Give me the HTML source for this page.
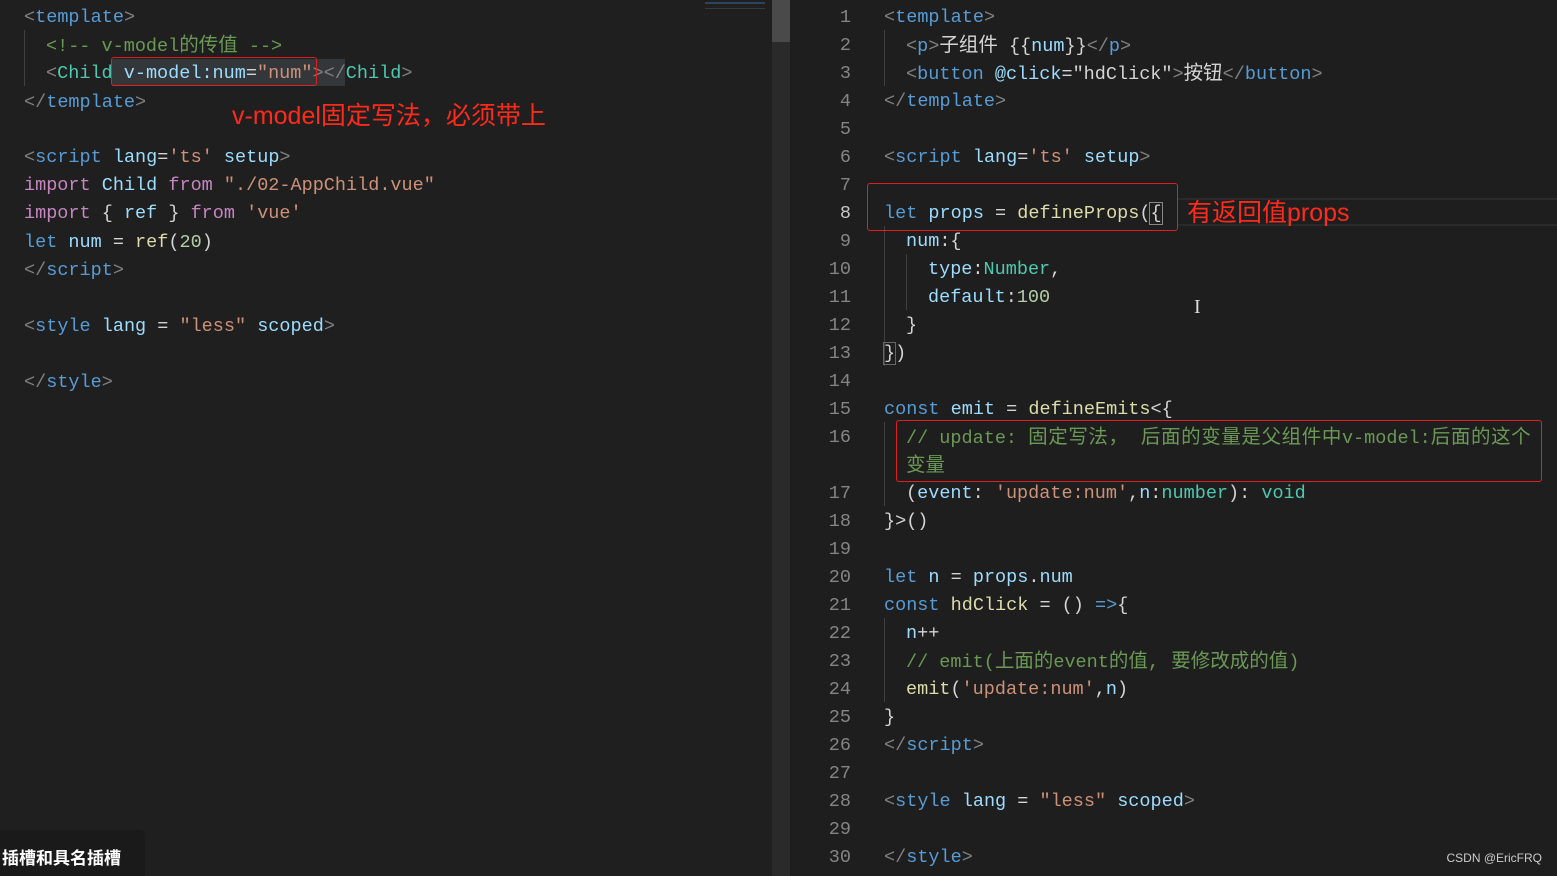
<!DOCTYPE html><html><head><meta charset="utf-8"><style>
body{margin:0;width:1557px;height:876px;background:#1f1f1f;overflow:hidden;position:relative;font-family:"Liberation Mono","Noto Sans CJK SC",monospace;font-size:18.5px;color:#d4d4d4}
.l{position:absolute;white-space:pre;line-height:28px;height:28px;margin-top:2px}
.n{position:absolute;left:800px;width:51px;text-align:right;color:#858585;line-height:28px;margin-top:2px}
.t{color:#569cd6}.b{color:#808080}.a{color:#9cdcfe}.s{color:#ce9178}.k{color:#c586c0}.f{color:#dcdcaa}.c{color:#6a9955}.num{color:#b5cea8}.g{color:#4ec9b0}.w{color:#d4d4d4}
.cj{font-size:19.5px}
.box{position:absolute;border:1.5px solid #e02020;border-radius:3px}
.red{position:absolute;color:#ff2a1a;font-family:"Liberation Sans","Noto Sans CJK SC",sans-serif;font-size:25px;white-space:pre}
.guide{position:absolute;width:1px;background:#404040}
</style></head><body>
<div style="position:absolute;left:772px;top:0;width:18px;height:876px;background:#2a2a2a"></div>
<div style="position:absolute;left:772px;top:0;width:18px;height:42px;background:#4a4a4a"></div>
<div style="position:absolute;left:790px;top:0;width:767px;height:876px;background:#1e1e1e"></div>
<div style="position:absolute;left:705px;top:2px;width:60px;height:30px;opacity:.5;background:linear-gradient(#3a6a9a 0 2px,transparent 2px 6px,#555 6px 7px,transparent 7px)"></div>
<!-- left -->
<div class="guide" style="left:24px;top:30px;height:56px"></div>
<div class="l" style="left:24px;top:2px"><span class="b">&lt;</span><span class="t">template</span><span class="b">&gt;</span></div>
<div class="l" style="left:46px;top:30px"><span class="c">&lt;!-- v-model<span class="cj">的传值</span> --&gt;</span></div>
<div style="position:absolute;left:112px;top:59px;width:233px;height:27px;background:#34373a"></div>
<div class="l" style="left:46px;top:58px"><span class="b">&lt;</span><span class="g">Child</span> <span class="a">v-model:num</span>=<span class="s">"num"</span><span class="b">&gt;&lt;/</span><span class="g">Child</span><span class="b">&gt;</span></div>
<div class="box" style="left:111px;top:57px;width:204px;height:27px"></div>
<div class="l" style="left:24px;top:87px"><span class="b">&lt;/</span><span class="t">template</span><span class="b">&gt;</span></div>
<div class="red" style="left:232px;top:96px">v-model固定写法，必须带上</div>
<div class="l" style="left:24px;top:142px"><span class="b">&lt;</span><span class="t">script</span> <span class="a">lang</span>=<span class="s">'ts'</span> <span class="a">setup</span><span class="b">&gt;</span></div>
<div class="l" style="left:24px;top:170px"><span class="k">import</span> <span class="a">Child</span> <span class="k">from</span> <span class="s">"./02-AppChild.vue"</span></div>
<div class="l" style="left:24px;top:198px"><span class="k">import</span> { <span class="a">ref</span> } <span class="k">from</span> <span class="s">'vue'</span></div>
<div class="l" style="left:24px;top:227px"><span class="t">let</span> <span class="a">num</span> = <span class="f">ref</span>(<span class="num">20</span>)</div>
<div class="l" style="left:24px;top:255px"><span class="b">&lt;/</span><span class="t">script</span><span class="b">&gt;</span></div>
<div class="l" style="left:24px;top:311px"><span class="b">&lt;</span><span class="t">style</span> <span class="a">lang</span> = <span class="s">"less"</span> <span class="a">scoped</span><span class="b">&gt;</span></div>
<div class="l" style="left:24px;top:367px"><span class="b">&lt;/</span><span class="t">style</span><span class="b">&gt;</span></div>
<div style="position:absolute;left:0;top:830px;width:145px;height:46px;background:#1a1a1a;border-radius:0 6px 0 0"></div>
<div style="position:absolute;left:2px;top:844px;color:#fff;font-family:'Noto Sans CJK SC',sans-serif;font-size:17px;font-weight:bold">插槽和具名插槽</div>
<!-- right -->
<div class="n" style="top:2px">1</div><div class="n" style="top:30px">2</div><div class="n" style="top:58px">3</div><div class="n" style="top:86px">4</div><div class="n" style="top:114px">5</div><div class="n" style="top:142px">6</div><div class="n" style="top:170px">7</div><div class="n" style="top:198px;color:#c6c6c6">8</div><div class="n" style="top:226px">9</div><div class="n" style="top:254px">10</div><div class="n" style="top:282px">11</div><div class="n" style="top:310px">12</div><div class="n" style="top:338px">13</div><div class="n" style="top:366px">14</div><div class="n" style="top:394px">15</div><div class="n" style="top:422px">16</div><div class="n" style="top:478px">17</div><div class="n" style="top:506px">18</div><div class="n" style="top:534px">19</div><div class="n" style="top:562px">20</div><div class="n" style="top:590px">21</div><div class="n" style="top:618px">22</div><div class="n" style="top:646px">23</div><div class="n" style="top:674px">24</div><div class="n" style="top:702px">25</div><div class="n" style="top:730px">26</div><div class="n" style="top:758px">27</div><div class="n" style="top:786px">28</div><div class="n" style="top:814px">29</div><div class="n" style="top:842px">30</div>
<div class="guide" style="left:884px;top:30px;height:56px"></div>
<div class="guide" style="left:884px;top:226px;height:140px"></div>
<div class="guide" style="left:906px;top:254px;height:56px"></div>
<div class="guide" style="left:884px;top:422px;height:84px"></div>
<div class="guide" style="left:884px;top:618px;height:84px"></div>
<div style="position:absolute;left:1178px;top:198px;width:379px;height:28px;border-top:2px solid #2a2a2a;border-bottom:2px solid #2a2a2a;box-sizing:border-box"></div>
<div class="l" style="left:884px;top:2px"><span class="b">&lt;</span><span class="t">template</span><span class="b">&gt;</span></div>
<div class="l" style="left:906px;top:30px"><span class="b">&lt;</span><span class="t">p</span><span class="b">&gt;</span><span class="cj">子组件</span> {{<span class="a">num</span>}}<span class="b">&lt;/</span><span class="t">p</span><span class="b">&gt;</span></div>
<div class="l" style="left:906px;top:58px"><span class="b">&lt;</span><span class="t">button</span> <span class="a">@click</span>=<span class="w">"hdClick"</span><span class="b">&gt;</span><span class="cj">按钮</span><span class="b">&lt;/</span><span class="t">button</span><span class="b">&gt;</span></div>
<div class="l" style="left:884px;top:86px"><span class="b">&lt;/</span><span class="t">template</span><span class="b">&gt;</span></div>
<div class="l" style="left:884px;top:142px"><span class="b">&lt;</span><span class="t">script</span> <span class="a">lang</span>=<span class="s">'ts'</span> <span class="a">setup</span><span class="b">&gt;</span></div>
<div class="l" style="left:884px;top:198px"><span class="t">let</span> <span class="a">props</span> = <span class="f">defineProps</span>(<span style="outline:1px solid #888">{</span></div>
<div class="box" style="left:867px;top:183px;width:309px;height:46px"></div>
<div class="red" style="left:1187px;top:193px">有返回值props</div>
<div class="l" style="left:906px;top:226px"><span class="a">num</span>:{</div>
<div class="l" style="left:928px;top:254px"><span class="a">type</span>:<span class="g">Number</span>,</div>
<div class="l" style="left:928px;top:282px"><span class="a">default</span>:<span class="num">100</span></div>
<div class="l" style="left:906px;top:310px">}</div>
<div class="l" style="left:884px;top:338px"><span style="outline:1px solid #666">}</span>)</div>
<div class="l" style="left:884px;top:394px"><span class="t">const</span> <span class="a">emit</span> = <span class="f">defineEmits</span>&lt;{</div>
<div class="l" style="left:906px;top:422px"><span class="c">// update: <span class="cj" style="letter-spacing:0.6px">固定写法， 后面的变量是父组件中</span>v-model:<span class="cj" style="letter-spacing:0.6px">后面的这个</span></span></div>
<div class="l" style="left:906px;top:450px"><span class="c cj">变量</span></div>
<div class="box" style="left:896px;top:420px;width:644px;height:60px"></div>
<div class="l" style="left:906px;top:478px">(<span class="a">event</span>: <span class="s">'update:num'</span>,<span class="a">n</span>:<span class="g">number</span>): <span class="g">void</span></div>
<div class="l" style="left:884px;top:506px">}&gt;()</div>
<div class="l" style="left:884px;top:562px"><span class="t">let</span> <span class="a">n</span> = <span class="a">props</span>.<span class="a">num</span></div>
<div class="l" style="left:884px;top:590px"><span class="t">const</span> <span class="f">hdClick</span> = () <span class="t">=&gt;</span>{</div>
<div class="l" style="left:906px;top:618px"><span class="a">n</span>++</div>
<div class="l" style="left:906px;top:646px"><span class="c">// emit(<span class="cj">上面的</span>event<span class="cj">的值, 要修改成的值</span>)</span></div>
<div class="l" style="left:906px;top:674px"><span class="f">emit</span>(<span class="s">'update:num'</span>,<span class="a">n</span>)</div>
<div class="l" style="left:884px;top:702px">}</div>
<div class="l" style="left:884px;top:730px"><span class="b">&lt;/</span><span class="t">script</span><span class="b">&gt;</span></div>
<div class="l" style="left:884px;top:786px"><span class="b">&lt;</span><span class="t">style</span> <span class="a">lang</span> = <span class="s">"less"</span> <span class="a">scoped</span><span class="b">&gt;</span></div>
<div class="l" style="left:884px;top:842px"><span class="b">&lt;/</span><span class="t">style</span><span class="b">&gt;</span></div>
<div style="position:absolute;left:1194px;top:296px;color:#ddd;font-family:'Liberation Serif',serif;font-size:20px">I</div>
<div style="position:absolute;right:15px;top:851px;color:#ccc;font-family:'Liberation Sans',sans-serif;font-size:12px">CSDN @EricFRQ</div>
</body></html>
